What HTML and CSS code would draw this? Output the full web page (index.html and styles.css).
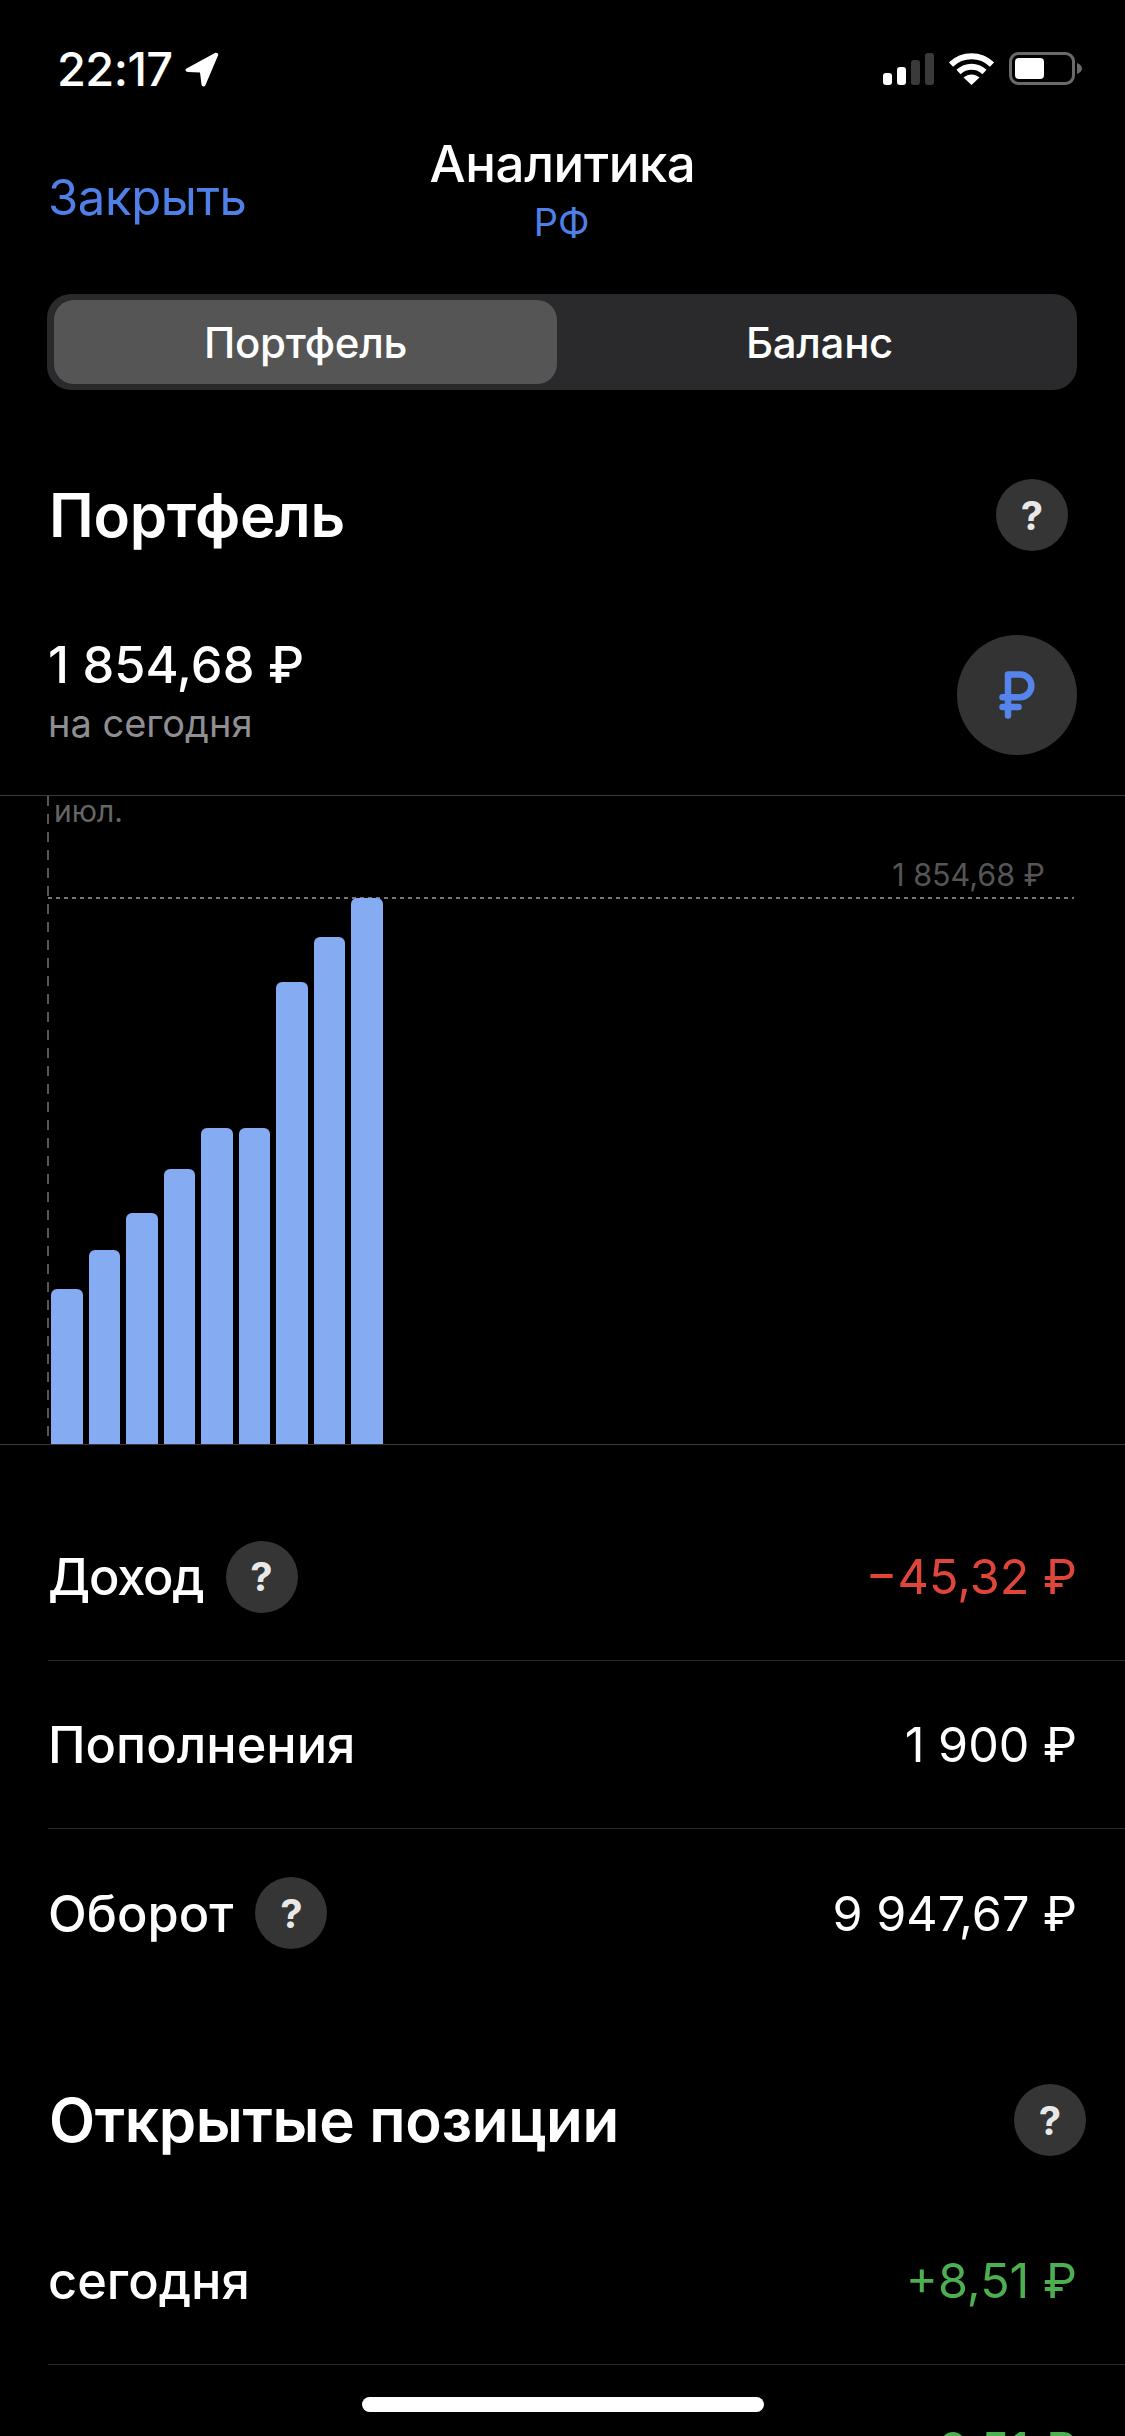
FILE: index.html
```html
<!DOCTYPE html>
<html lang="ru">
<head>
<meta charset="utf-8">
<title>Аналитика</title>
<link rel="stylesheet" href="styles.css">
</head>
<body>
<div class="screen">
  <header class="status">
    <div class="status-left">
      <span class="clock">22:17</span>
      <svg class="loc" viewBox="0 0 34 35"><path d="M1.500 16.500 30 1c2-1 3.800.6 3 2.600L20.500 33c-.9 2.200-3.700 2-4-.4L15 20.500 3 20c-2.500-.2-3.300-2.300-1.500-3.500z" fill="#fff"/></svg>
    </div>
    <div class="status-right">
      <svg class="signal" viewBox="0 0 51 32">
        <rect x="0" y="20" width="9" height="12" rx="3" fill="#fff"/>
        <rect x="14" y="14" width="9" height="18" rx="3" fill="#fff"/>
        <rect x="28" y="7" width="9" height="25" rx="3" fill="#3a3a3a"/>
        <rect x="42" y="0" width="9" height="32" rx="3" fill="#3a3a3a"/>
      </svg>
      <svg class="wifi" viewBox="0 0 45 33">
        <path d="M2 12.500C13.500 1.500 31.500 1.500 43 12.500" fill="none" stroke="#fff" stroke-width="6"/>
        <path d="M9.500 20C17 13 28 13 35.500 20" fill="none" stroke="#fff" stroke-width="6"/>
        <path d="M14.500 25.500C19.500 21.500 25.500 21.500 30.500 25.500L22.500 33z" fill="#fff"/>
      </svg>
      <svg class="battery" viewBox="0 0 73 33">
        <rect x="1.500" y="1.500" width="63" height="30" rx="8" fill="none" stroke="#6a6a6a" stroke-width="3"/>
        <rect x="6" y="6" width="29" height="21" rx="4" fill="#fff"/>
        <path d="M68 11c3 1 5 3 5 5.500s-2 4.500-5 5.500z" fill="#6a6a6a"/>
      </svg>
    </div>
  </header>

  <nav class="nav">
    <span class="close">Закрыть</span>
    <div class="nav-title">
      <div class="nav-main">Аналитика</div>
      <div class="nav-sub">РФ</div>
    </div>
  </nav>

  <div class="segment">
    <div class="seg-item seg-active">Портфель</div>
    <div class="seg-item seg-rest">Баланс</div>
  </div>

  <section class="sec-head sec-portfolio">
    <h2 class="h2">Портфель</h2>
    <span class="help help-inset">?</span>
  </section>

  <section class="total">
    <div class="total-text">
      <div class="total-value">1 854,68 ₽</div>
      <div class="total-sub">на сегодня</div>
    </div>
    <div class="currency">
      <svg class="rub-icon" viewBox="0 0 36 48"><path d="M9 44.500V3.500h12a11.300 11.300 0 0 1 0 22.700H3.500M3.500 36h16" fill="none" stroke="#5585ec" stroke-width="6.500" stroke-linecap="round" stroke-linejoin="round"/></svg>
    </div>
  </section>

  <section class="chart">
    <span class="month">июл.</span>
    <span class="max-label">1 854,68 ₽</span>
    <div class="max-line"></div>
    <div class="bars">
      <div class="bar" style="height:155px"></div>
      <div class="bar" style="height:194px"></div>
      <div class="bar" style="height:231px"></div>
      <div class="bar" style="height:275px"></div>
      <div class="bar" style="height:316px"></div>
      <div class="bar" style="height:316px"></div>
      <div class="bar" style="height:462px"></div>
      <div class="bar" style="height:507px"></div>
      <div class="bar" style="height:546px"></div>
    </div>
  </section>

  <section class="rows rows-first">
    <div class="row">
      <div class="row-label"><span class="tight">Доход</span><span class="help">?</span></div>
      <div class="row-value neg">−45,32 ₽</div>
    </div>
    <div class="row">
      <div class="row-label"><span>Пополнения</span></div>
      <div class="row-value">1 900 ₽</div>
    </div>
    <div class="row row-last">
      <div class="row-label"><span>Оборот</span><span class="help">?</span></div>
      <div class="row-value">9 947,67 ₽</div>
    </div>
  </section>

  <section class="sec-head sec-open">
    <h2 class="h2">Открытые позиции</h2>
    <span class="help">?</span>
  </section>

  <section class="rows">
    <div class="row">
      <div class="row-label"><span>сегодня</span></div>
      <div class="row-value pos">+8,51 ₽</div>
    </div>
    <div class="row row-last row-end">
      <div class="row-value pos">+8,51 ₽</div>
    </div>
  </section>

  <div class="home"></div>
</div>
</body>
</html>
```
FILE: styles.css
```css
* { box-sizing: border-box; margin: 0; padding: 0; }
html, body { background: #000; }
body { width: 1125px; height: 2436px; overflow: hidden; font-family: Inter, "Liberation Sans", sans-serif; color: #fff; }
.screen { position: relative; width: 1125px; height: 2436px; overflow: hidden; background: #000; }

.status { height: 136px; padding: 44px 43px 0 57px; display: flex; justify-content: space-between; align-items: flex-start; }
.status-left { display: flex; align-items: center; gap: 12px; }
.clock { font-size: 47px; line-height: 50px; font-weight: 500; letter-spacing: -0.6px; }
.loc { width: 34px; height: 35px; }
.status-right { display: flex; align-items: center; gap: 15px; padding-top: 8px; }
.signal { width: 51px; height: 32px; }
.wifi { width: 45px; height: 33px; }
.battery { width: 73px; height: 33px; }

.nav { position: relative; height: 158px; }
.close { position: absolute; left: 48px; top: 33px; font-size: 49px; line-height: 58px; color: #4f80e8; letter-spacing: -0.4px; }
.nav-title { display: flex; flex-direction: column; align-items: center; }
.nav-main { font-size: 51px; line-height: 56px; font-weight: 500; letter-spacing: -0.4px; }
.nav-sub { margin-top: 7px; margin-right: 2px; font-size: 38px; line-height: 46px; color: #4f80e8; }

.segment { margin: 0 48px 0 47px; height: 96px; padding: 6px 7px; display: flex; background: #2a2a2c; border-radius: 24px; }
.seg-item { display: flex; align-items: center; justify-content: center; font-size: 42px; font-weight: 500; letter-spacing: -0.3px; border-radius: 20px; }
.seg-active { flex: none; width: 503px; background: #555; }
.seg-rest { flex: 1; padding-left: 12px; }

.sec-head { display: flex; align-items: center; justify-content: space-between; }
.sec-portfolio { margin-top: 89px; padding: 0 57px 0 49px; height: 72px; }
.sec-open { margin-top: 87px; padding: 0 39px 0 49px; height: 72px; }
.h2 { font-size: 60px; line-height: 72px; font-weight: 600; letter-spacing: -0.3px; }
.help { flex: none; width: 72px; height: 72px; border-radius: 50%; background: #353535; color: #e8e8e8; display: flex; align-items: center; justify-content: center; font-size: 40px; font-weight: 700; }

.total { margin-top: 84px; padding: 0 48px; display: flex; justify-content: space-between; align-items: center; height: 120px; }
.total-text { padding-bottom: 10px; }
.total-value { font-size: 50.500px; line-height: 60px; font-weight: 500; }
.total-sub { margin-top: 6px; font-size: 38px; line-height: 44px; color: #8e8e93; }
.currency { width: 120px; height: 120px; border-radius: 50%; background: #333; display: flex; align-items: center; justify-content: center; }
.rub-icon { width: 36px; height: 48px; }

.chart { position: relative; margin-top: 40px; height: 650px; border-top: 1px solid #3a3a3c; border-bottom: 1px solid #3a3a3c; display: flex; align-items: flex-end; }
.chart::before { content: ""; position: absolute; left: 47px; top: 0; bottom: 0; width: 2px; background: repeating-linear-gradient(to bottom, #555 0 10px, transparent 10px 18px); }
.month { position: absolute; left: 54px; top: -2px; font-size: 30px; line-height: 34px; color: #666; }
.max-label { position: absolute; right: 80px; top: 62px; font-size: 30.500px; line-height: 34px; color: #555; }
.max-line { position: absolute; left: 48px; right: 51px; top: 101px; height: 2px; background: repeating-linear-gradient(to right, #777 0 4px, transparent 4px 8px); }
.bars { position: relative; margin-left: 51px; display: flex; align-items: flex-end; gap: 6px; }
.bar { width: 31.500px; background: #85abf2; border-radius: 6px 6px 0 0; }

.rows { padding-left: 48px; }
.rows-first { margin-top: 48px; }
.sec-open + .rows { margin-top: 41px; }
.row { height: 168px; display: flex; align-items: center; justify-content: space-between; padding-right: 48px; border-bottom: 1px solid #2c2c2e; }
.row-last { border-bottom: none; }
.row-end { justify-content: flex-end; }
.row-label { display: flex; align-items: center; gap: 22px; font-size: 50.500px; font-weight: 500; }
.tight { letter-spacing: -1.2px; }
.row-value { font-size: 48.500px; }
.neg { color: #e0453a; }
.pos { color: #4caf50; }

.home { position: absolute; left: 362px; bottom: 24px; width: 402px; height: 15px; background: #fff; border-radius: 8px; }
```
